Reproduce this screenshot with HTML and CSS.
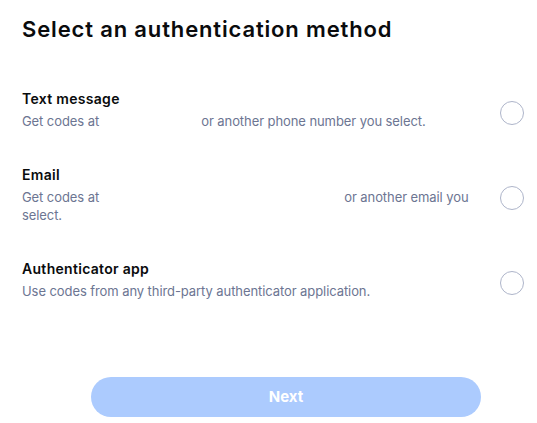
FILE: index.html
```html
<!DOCTYPE html>
<html lang="en">
<head>
<meta charset="utf-8">
<title>Select an authentication method</title>
<link rel="stylesheet" href="styles.css">
</head>
<body>
<main class="page">
  <h1 class="title">Select an authentication method</h1>
  <div class="options">
    <label class="option">
      <div class="option-text">
        <div class="option-label">Text message</div>
        <div class="option-desc">Get codes at <span class="redact r-phone"></span> or another phone number you select.</div>
      </div>
      <span class="radio"></span>
    </label>
    <label class="option">
      <div class="option-text">
        <div class="option-label">Email</div>
        <div class="option-desc">Get codes at <span class="redact r-email"></span> or another email you select.</div>
      </div>
      <span class="radio"></span>
    </label>
    <label class="option">
      <div class="option-text">
        <div class="option-label">Authenticator app</div>
        <div class="option-desc">Use codes from any third-party authenticator application.</div>
      </div>
      <span class="radio"></span>
    </label>
  </div>
  <button class="next" type="button" disabled>Next</button>
</main>
</body>
</html>
```
FILE: styles.css
```css
html, body {
  margin: 0;
  padding: 0;
  background: #ffffff;
}

body {
  font-family: Inter, "Noto Sans", "Liberation Sans", sans-serif;
  color: #0a0b0d;
}

.page {
  display: flex;
  flex-direction: column;
  padding: 15px 13px 0 22px;
}

.title {
  margin: 0 0 46px;
  font-size: 22px;
  line-height: 28px;
  font-weight: 600;
  letter-spacing: 0.85px;
  color: #0a0b0d;
}

.options {
  display: flex;
  flex-direction: column;
  gap: 35px;
}

.option {
  display: flex;
  align-items: center;
}

.option-text {
  flex: 1;
  min-width: 0;
}

.option-label {
  font-size: 14px;
  line-height: 20px;
  font-weight: 600;
  letter-spacing: 0.3px;
  color: #0a0b0d;
}

.option-desc {
  margin-top: 3px;
  font-size: 13px;
  line-height: 18px;
  font-weight: 400;
  letter-spacing: -0.08px;
  color: #6c7592;
}

.redact {
  display: inline-block;
  height: 0;
}

.r-phone {
  width: 95px;
}

.r-email {
  width: 238px;
}

.radio {
  flex: none;
  box-sizing: border-box;
  width: 24px;
  height: 24px;
  margin: 7px 0 0 24px;
  border: 1px solid #aeb5ca;
  border-radius: 50%;
  background: #ffffff;
}

.next {
  align-self: flex-start;
  margin: 77px 0 0 69px;
  width: 390px;
  height: 40px;
  border: none;
  border-radius: 20px;
  background: #accbfe;
  color: #ffffff;
  font-family: Inter, "Noto Sans", "Liberation Sans", sans-serif;
  font-size: 15px;
  font-weight: 700;
  line-height: 40px;
  padding: 0;
}
```
